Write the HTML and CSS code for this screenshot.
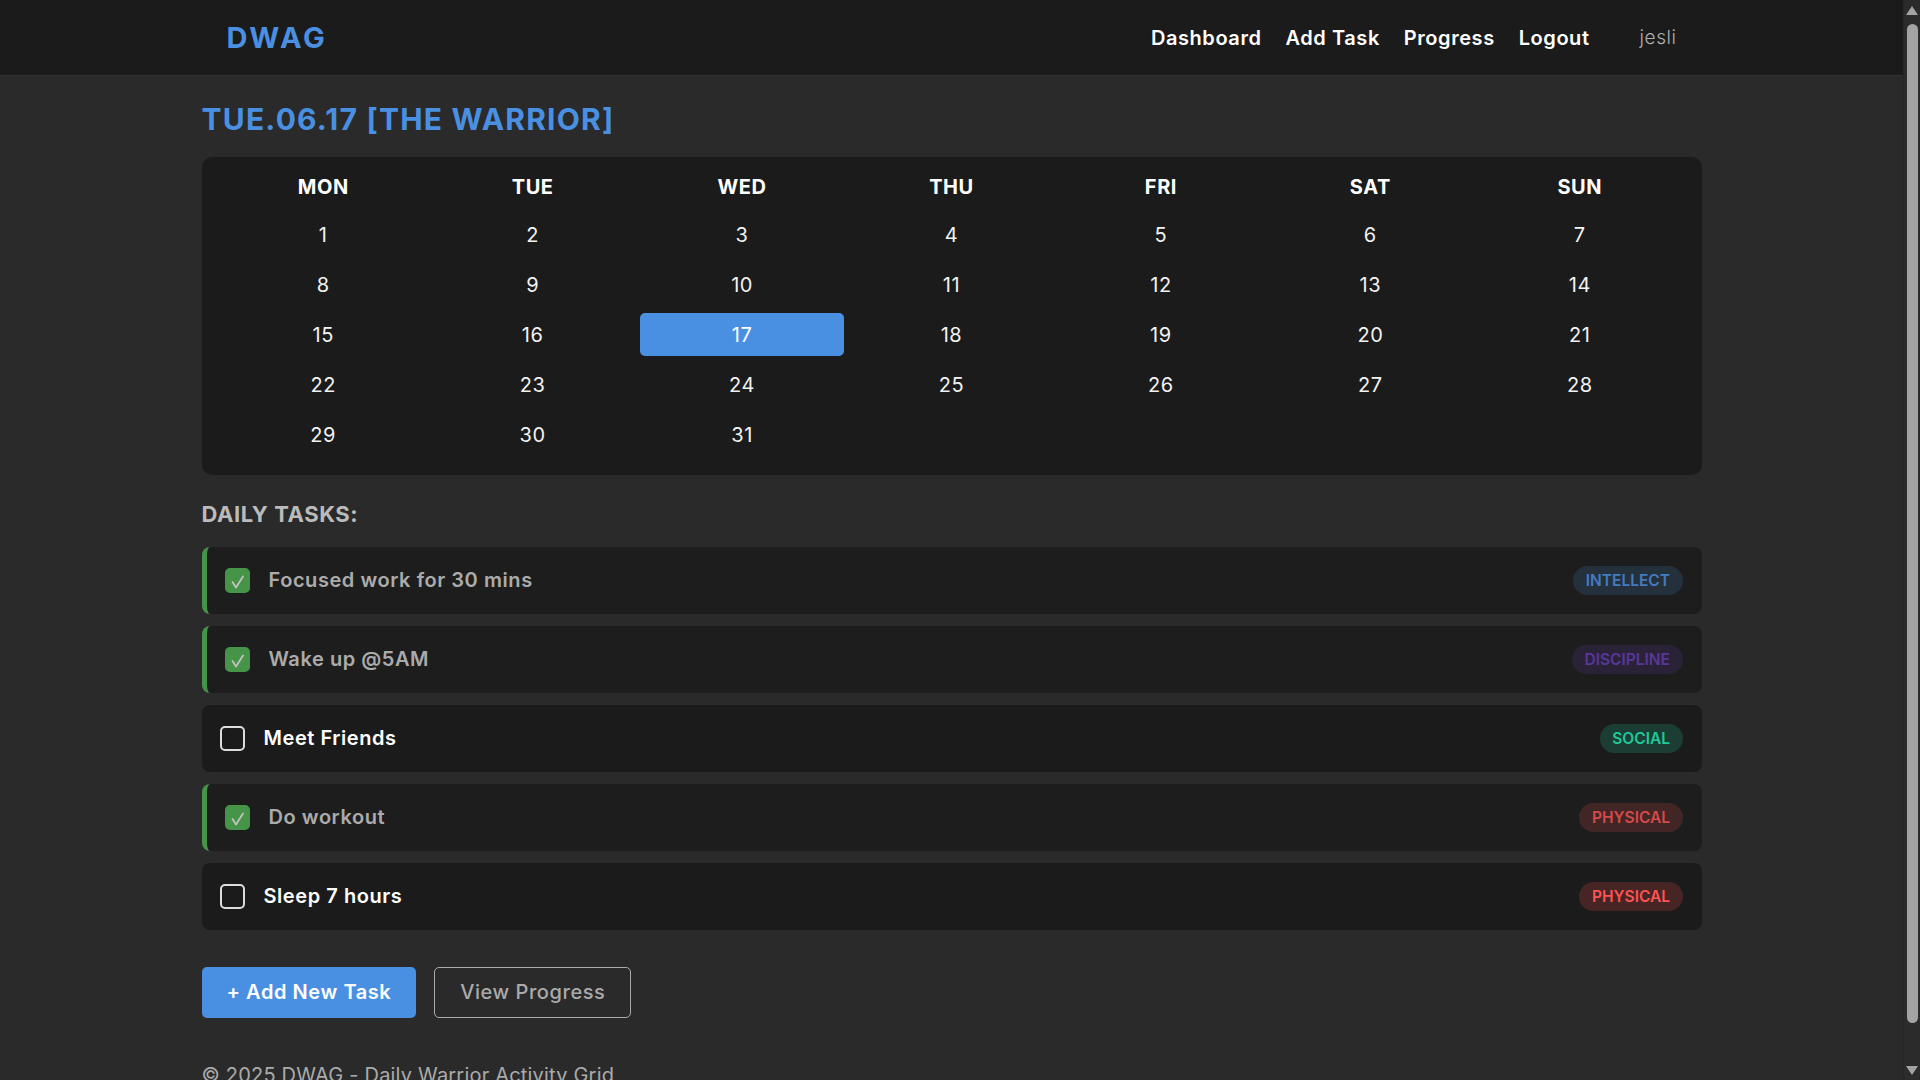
FILE: index.html
```html
<!DOCTYPE html>
<html lang="en">
<head>
<meta charset="utf-8">
<title>DWAG - Dashboard</title>
<link rel="stylesheet" href="styles.css">
</head>
<body>
<nav class="navbar">
  <div class="nav-inner">
    <a class="logo" href="#">DWAG</a>
    <div class="nav-links">
      <a href="#">Dashboard</a>
      <a href="#">Add Task</a>
      <a href="#">Progress</a>
      <a href="#">Logout</a>
      <span class="user">jesli</span>
    </div>
  </div>
</nav>
<main class="container">
  <h1 class="date-title">TUE.06.17 [THE WARRIOR]</h1>
  <section class="calendar">
    <div class="cal-head">
      <div>MON</div><div>TUE</div><div>WED</div><div>THU</div><div>FRI</div><div>SAT</div><div>SUN</div>
    </div>
    <div class="cal-grid">
      <div class="day">1</div><div class="day">2</div><div class="day">3</div><div class="day">4</div><div class="day">5</div><div class="day">6</div><div class="day">7</div>
      <div class="day">8</div><div class="day">9</div><div class="day">10</div><div class="day">11</div><div class="day">12</div><div class="day">13</div><div class="day">14</div>
      <div class="day">15</div><div class="day">16</div><div class="day today">17</div><div class="day">18</div><div class="day">19</div><div class="day">20</div><div class="day">21</div>
      <div class="day">22</div><div class="day">23</div><div class="day">24</div><div class="day">25</div><div class="day">26</div><div class="day">27</div><div class="day">28</div>
      <div class="day">29</div><div class="day">30</div><div class="day">31</div>
    </div>
  </section>

  <h2 class="tasks-title">DAILY TASKS:</h2>
  <ul class="task-list">
    <li class="task done">
      <span class="check"><svg viewBox="0 0 25 25" width="25" height="25"><polyline points="7.5,14 11,19.5 18,8.5"/></svg></span>
      <span class="task-name">Focused work for 30 mins</span>
      <span class="tag tag-intellect">INTELLECT</span>
    </li>
    <li class="task done">
      <span class="check"><svg viewBox="0 0 25 25" width="25" height="25"><polyline points="7.5,14 11,19.5 18,8.5"/></svg></span>
      <span class="task-name">Wake up @5AM</span>
      <span class="tag tag-discipline">DISCIPLINE</span>
    </li>
    <li class="task">
      <span class="check"></span>
      <span class="task-name">Meet Friends</span>
      <span class="tag tag-social">SOCIAL</span>
    </li>
    <li class="task done">
      <span class="check"><svg viewBox="0 0 25 25" width="25" height="25"><polyline points="7.5,14 11,19.5 18,8.5"/></svg></span>
      <span class="task-name">Do workout</span>
      <span class="tag tag-physical">PHYSICAL</span>
    </li>
    <li class="task">
      <span class="check"></span>
      <span class="task-name">Sleep 7 hours</span>
      <span class="tag tag-physical">PHYSICAL</span>
    </li>
  </ul>

  <div class="actions">
    <a class="btn btn-primary" href="#">+ Add New Task</a>
    <a class="btn btn-outline" href="#">View Progress</a>
  </div>

  <footer class="footer">© 2025 DWAG - Daily Warrior Activity Grid</footer>
</main>

<div class="scrollbar" aria-hidden="true">
  <span class="sb-arrow sb-up"></span>
  <span class="sb-thumb"></span>
  <span class="sb-arrow sb-down"></span>
</div>
</body>
</html>
```

FILE: styles.css
```css
html {
  color-scheme: dark;
}

body {
  margin: 0 17px 0 0;
  background: #2a2a2a;
  color: #ffffff;
  font-family: Inter, "Open Sans", "DejaVu Sans", sans-serif;
  letter-spacing: 0.035em;
}

a {
  color: inherit;
  text-decoration: none;
}

/* Navbar */
.navbar {
  background: #1b1b1b;
  box-shadow: 0 1px 0 #2f2f2f;
}

.nav-inner {
  max-width: 1500px;
  margin: 0 auto;
  padding: 0 25px;
  height: 75px;
  box-sizing: border-box;
  display: flex;
  align-items: center;
  justify-content: space-between;
}

.logo {
  color: #4a90e2;
  font-size: 29px;
  font-weight: 700;
  letter-spacing: 0.09em;
}

.nav-links {
  display: flex;
  align-items: center;
  gap: 24px;
}

.nav-links a {
  font-size: 20px;
  font-weight: 600;
  color: #ffffff;
}

.nav-links .user {
  margin-left: 26px;
  font-size: 19px;
  font-weight: 300;
  color: #b0b0b0;
}

/* Main */
.container {
  max-width: 1500px;
  margin: 0 auto;
  padding-top: 25px;
}

.date-title {
  margin: 0 0 19px;
  color: #4a90e2;
  font-size: 30px;
  line-height: 38px;
  font-weight: 700;
  letter-spacing: 0.04em;
}

/* Calendar */
.calendar {
  background: #1b1b1b;
  border-radius: 10px;
  padding: 20px 20px 18px;
}

.cal-head,
.cal-grid {
  display: grid;
  grid-template-columns: repeat(7, 1fr);
  column-gap: 6px;
}

.cal-head {
  margin-bottom: 16px;
  text-align: center;
  font-size: 20px;
  line-height: 20px;
  font-weight: 700;
}

.cal-grid {
  row-gap: 7.2px;
}

.day {
  height: 43px;
  display: flex;
  align-items: center;
  justify-content: center;
  font-size: 20px;
  color: #f2f2f2;
  border-radius: 5px;
}

.day.today {
  background: #4a90e2;
  color: #ffffff;
}

/* Tasks */
.tasks-title {
  margin: 24px 0 18px;
  font-size: 22px;
  line-height: 30px;
  font-weight: 700;
  color: #bbbbbb;
}

.task-list {
  list-style: none;
  margin: 0;
  padding: 0;
  display: flex;
  flex-direction: column;
  gap: 12px;
}

.task {
  display: flex;
  align-items: center;
  height: 67px;
  box-sizing: border-box;
  padding: 0 19px 0 18px;
  background: #1b1b1b;
  border-radius: 8px;
}

.task.done {
  border-left: 5px solid #4caf50;
  opacity: 0.8;
}

.check {
  width: 25px;
  height: 25px;
  flex: none;
  box-sizing: border-box;
  border: 2px solid #dddddd;
  border-radius: 5px;
  margin-right: 19px;
  position: relative;
}

.check svg {
  position: absolute;
  left: -2px;
  top: -2px;
  fill: none;
  stroke: #e8e8e8;
  stroke-width: 1.8;
  stroke-linecap: round;
  stroke-linejoin: round;
}

.done .check {
  background: #4caf50;
  border-color: #4caf50;
}

.task-name {
  flex: 1;
  font-size: 20px;
  font-weight: 600;
  color: #ffffff;
}

.done .task-name {
  color: #cccccc;
}

.tag {
  height: 29px;
  line-height: 29px;
  padding: 0 12.5px;
  border-radius: 15px;
  font-size: 15.5px;
  font-weight: 600;
  letter-spacing: 0;
}

.tag-intellect {
  color: #4a90e2;
  background: rgba(74, 144, 226, 0.2);
}

.tag-discipline {
  color: #673ab7;
  background: rgba(103, 58, 183, 0.2);
}

.tag-social {
  color: #20c997;
  background: rgba(32, 201, 151, 0.2);
}

.tag-physical {
  color: #ff5252;
  background: rgba(255, 82, 82, 0.2);
}

/* Actions */
.actions {
  margin-top: 37px;
  display: flex;
  gap: 18px;
}

.btn {
  height: 51px;
  box-sizing: border-box;
  padding: 0 25px;
  display: inline-flex;
  align-items: center;
  border-radius: 5px;
  font-size: 20px;
  font-weight: 600;
}

.btn-primary {
  background: #4a90e2;
  color: #ffffff;
}

.btn-outline {
  border: 1px solid #aaaaaa;
  color: #aaaaaa;
  font-weight: 500;
}

.footer {
  margin-top: 45px;
  padding-bottom: 25px;
  font-size: 20px;
  color: #aaaaaa;
  letter-spacing: 0.01em;
}

/* Window scrollbar (drawn, since screenshots hide the native one) */
.scrollbar {
  position: fixed;
  top: 0;
  right: 0;
  width: 17px;
  height: 100vh;
  background: #2b2b2b;
  border-left: 1px solid #262626;
  box-sizing: border-box;
  display: flex;
  flex-direction: column;
  align-items: center;
}

.sb-arrow {
  width: 0;
  height: 0;
  border-left: 6px solid transparent;
  border-right: 6px solid transparent;
}

.sb-up {
  margin-top: 6px;
  border-bottom: 9px solid #a3a3a3;
}

.sb-down {
  margin-bottom: 5px;
  border-top: 9px solid #a3a3a3;
}

.sb-thumb {
  width: 11px;
  margin: 9px 0 43px;
  flex: 1;
  background: #a3a3a3;
  border-radius: 6px;
}
```
